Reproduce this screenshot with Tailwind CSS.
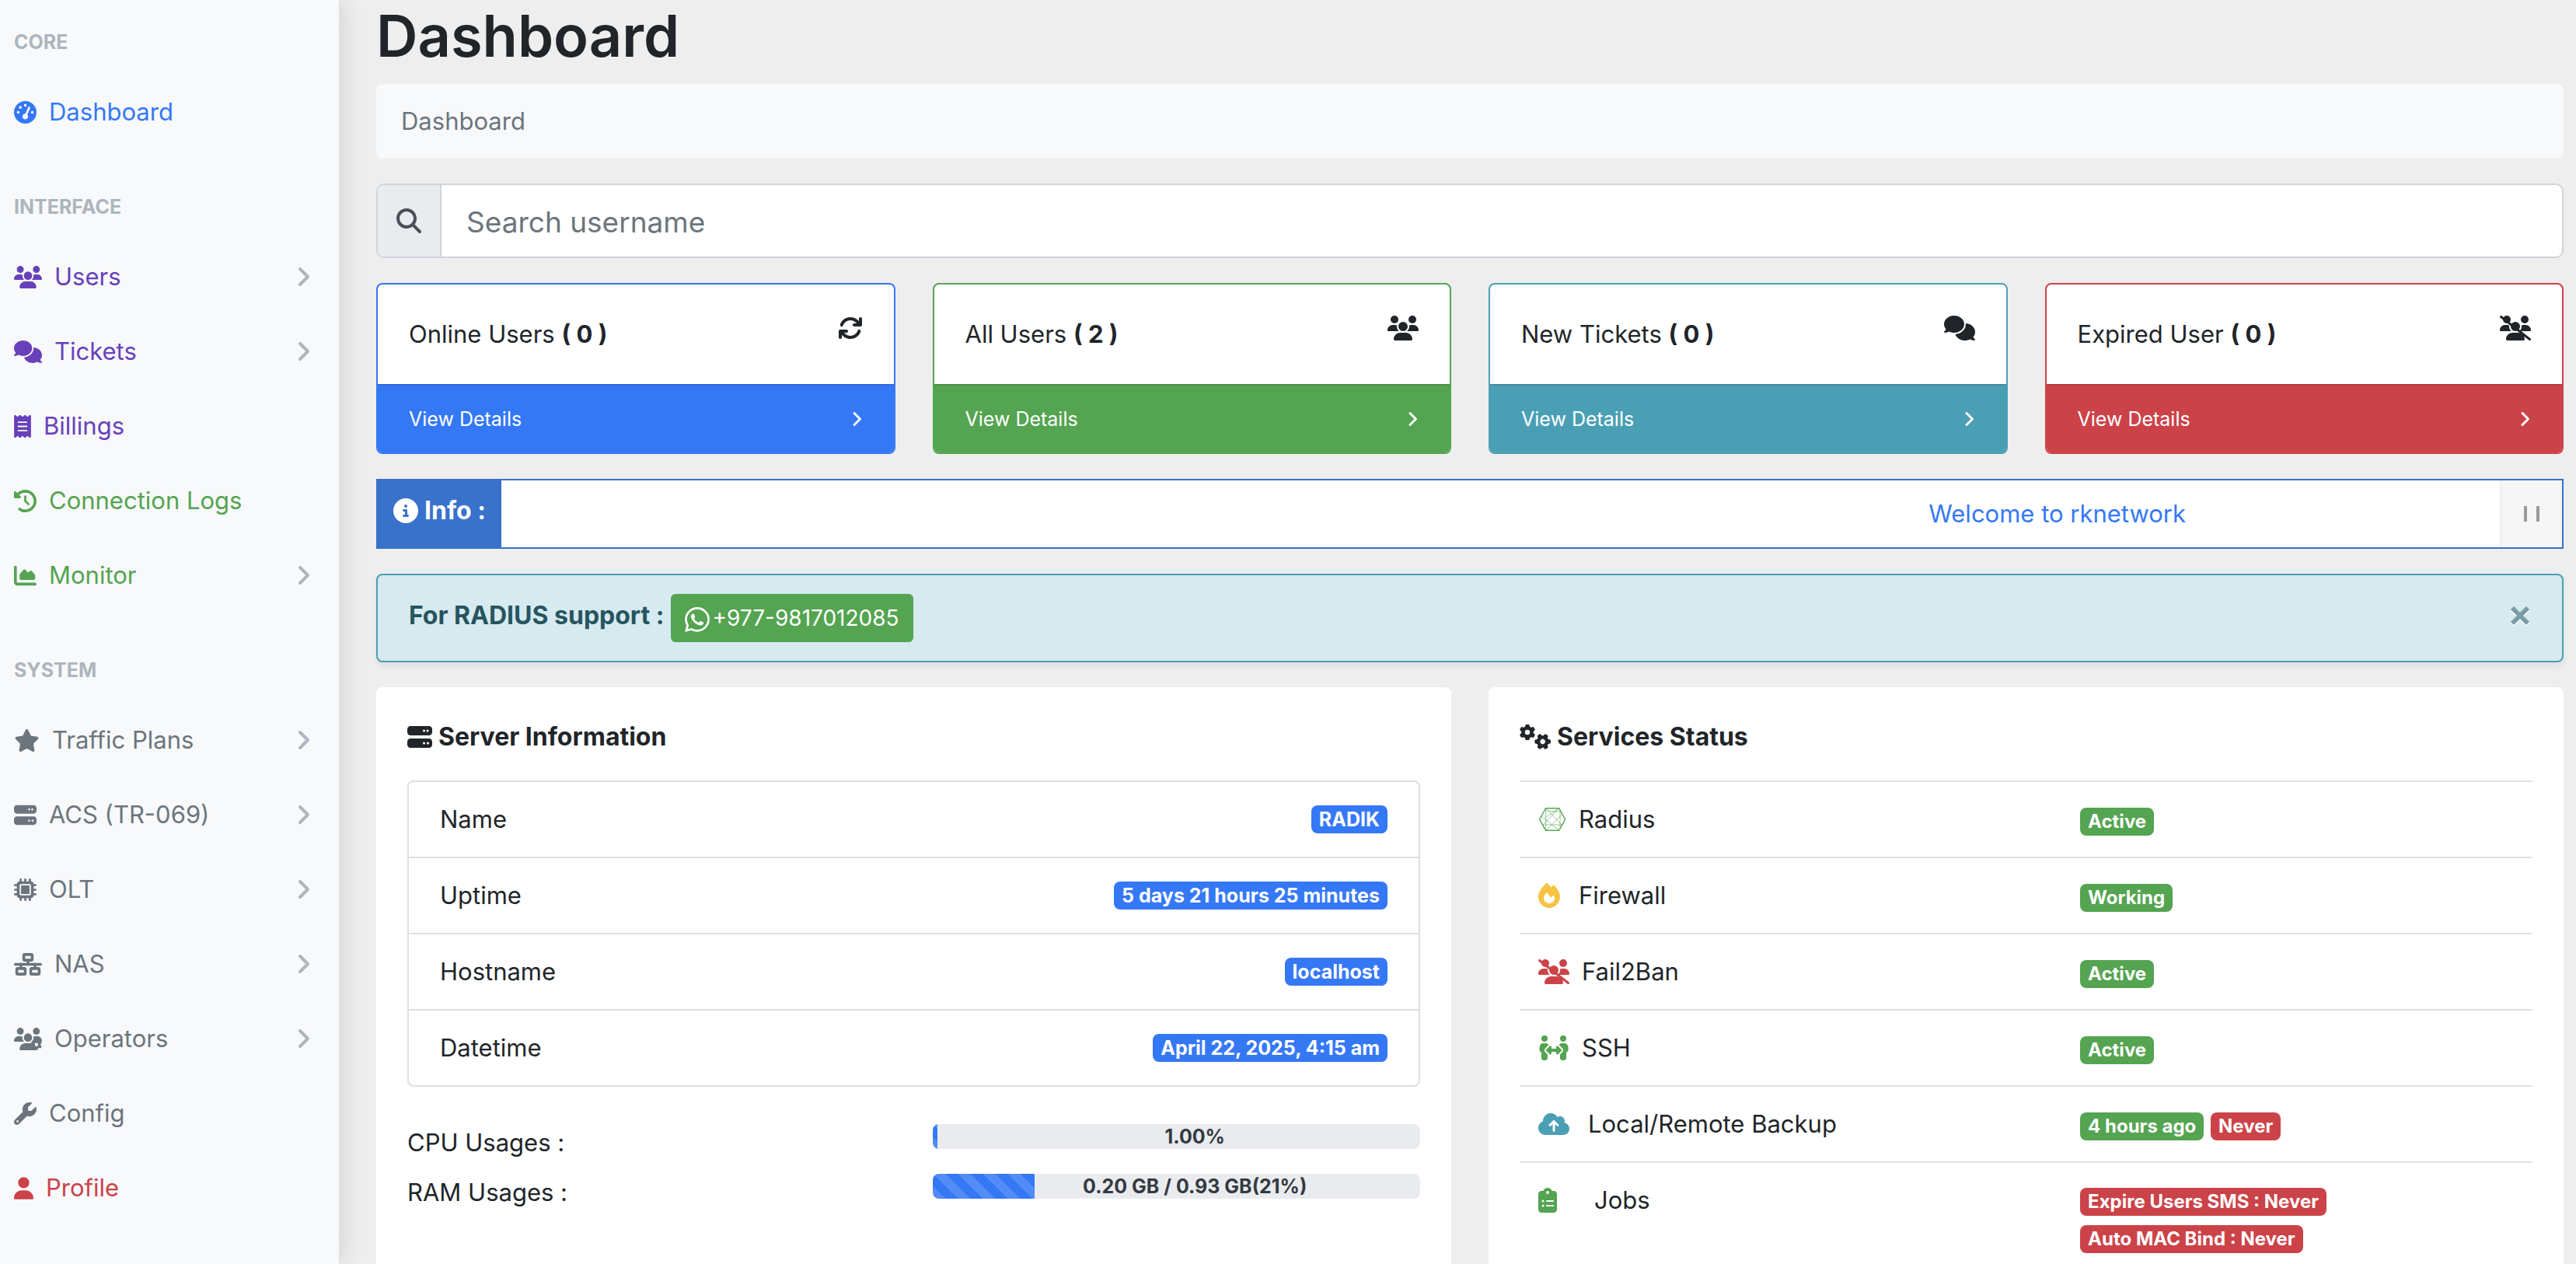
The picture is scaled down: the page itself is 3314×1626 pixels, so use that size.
<!DOCTYPE html>
<html lang="en">
<head>
<meta charset="utf-8">
<title>Dashboard</title>
<script src="https://cdn.jsdelivr.net/npm/@tailwindcss/browser@4"></script>
</head>
<body class="bg-[#eeeeee] font-['Inter',sans-serif] text-[31px] leading-[48px] text-[#212529] overflow-hidden">

<!-- Icon sprite -->
<svg class="hidden" aria-hidden="true">
  <symbol id="gauge" viewBox="0 0 512 512"><path d="M0 256a256 256 0 1 1 512 0A256 256 0 1 1 0 256zM288 96a32 32 0 1 0 -64 0 32 32 0 1 0 64 0zM256 416c35.3 0 64-28.7 64-64c0-17.4-6.9-33.1-18.1-44.6L366 161.7c5.3-12.1-.2-26.3-12.3-31.6s-26.3 .2-31.6 12.3L257.9 288c-.6 0-1.3 0-1.9 0c-35.3 0-64 28.7-64 64s28.7 64 64 64zM176 144a32 32 0 1 0 -64 0 32 32 0 1 0 64 0zM96 288a32 32 0 1 0 0-64 32 32 0 1 0 0 64zm352-32a32 32 0 1 0 -64 0 32 32 0 1 0 64 0z"/></symbol>
  <symbol id="users" viewBox="0 0 640 512"><path d="M144 0a80 80 0 1 1 0 160A80 80 0 1 1 144 0zM512 0a80 80 0 1 1 0 160A80 80 0 1 1 512 0zM0 298.7C0 239.8 47.8 192 106.7 192h42.7c15.9 0 31 3.5 44.6 9.7c-1.3 7.2-1.9 14.7-1.9 22.3c0 38.2 16.8 72.5 43.3 96c-.2 0-.4 0-.7 0H21.3C9.6 320 0 310.4 0 298.7zM405.3 320c-.2 0-.4 0-.7 0c26.6-23.5 43.3-57.8 43.3-96c0-7.6-.7-15-1.9-22.3c13.6-6.3 28.7-9.7 44.6-9.7h42.7C592.2 192 640 239.8 640 298.7c0 11.8-9.6 21.3-21.3 21.3H405.3zM224 224a96 96 0 1 1 192 0 96 96 0 1 1 -192 0zM128 485.3C128 411.7 187.7 352 261.3 352H378.7C452.3 352 512 411.7 512 485.3c0 14.7-11.9 26.7-26.7 26.7H154.7c-14.7 0-26.7-11.9-26.7-26.7z"/></symbol>
  <clipPath id="above-slash"><path d="M0 0H640V507L24 24z"/></clipPath>
  <clipPath id="below-slash"><path d="M0 80L552 512H0z"/></clipPath>
  <symbol id="users-slash" viewBox="0 0 640 512">
    <g clip-path="url(#above-slash)"><path d="M144 0a80 80 0 1 1 0 160A80 80 0 1 1 144 0zM512 0a80 80 0 1 1 0 160A80 80 0 1 1 512 0zM405.3 320c-.2 0-.4 0-.7 0c26.6-23.5 43.3-57.8 43.3-96c0-7.6-.7-15-1.9-22.3c13.6-6.3 28.7-9.7 44.6-9.7h42.7C592.2 192 640 239.8 640 298.7c0 11.8-9.6 21.3-21.3 21.3H405.3zM224 224a96 96 0 1 1 192 0 96 96 0 1 1 -192 0z"/></g>
    <g clip-path="url(#below-slash)"><path d="M0 298.7C0 239.8 47.8 192 106.7 192h42.7c15.9 0 31 3.5 44.6 9.7c-1.3 7.2-1.9 14.7-1.9 22.3c0 38.2 16.8 72.5 43.3 96c-.2 0-.4 0-.7 0H21.3C9.6 320 0 310.4 0 298.7zM128 485.3C128 411.7 187.7 352 261.3 352H378.7C452.3 352 512 411.7 512 485.3c0 14.7-11.9 26.7-26.7 26.7H154.7c-14.7 0-26.7-11.9-26.7-26.7z"/></g>
    <path d="M38.8 5.1C28.4-3.1 13.3-1.2 5.1 9.2S-1.2 34.7 9.2 42.9l592 464c10.4 8.2 25.5 6.3 33.7-4.1s6.3-25.5-4.1-33.7z"/></symbol>
  <symbol id="comments" viewBox="0 0 640 512"><path d="M208 352c114.9 0 208-78.8 208-176S322.9 0 208 0S0 78.8 0 176c0 38.6 14.7 74.3 39.6 103.4c-3.5 9.4-8.7 17.7-14.2 24.7c-4.8 6.2-9.7 11-13.3 14.3c-1.8 1.6-3.3 2.9-4.3 3.7c-.5 .4-.9 .7-1.1 .8l-.2 .2C1 327.2-1.4 334.4 .8 340.9S9.1 352 16 352c21.8 0 43.8-5.6 62.1-12.5c9.2-3.5 17.8-7.4 25.2-11.4C134.1 343.3 169.8 352 208 352zM448 176c0 112.3-99.1 196.9-216.5 207C255.8 457.4 336.4 512 432 512c38.2 0 73.9-8.7 104.7-23.9c7.5 4 16 7.9 25.2 11.4c18.3 6.9 40.3 12.5 62.1 12.5c6.9 0 13.1-4.5 15.2-11.1c2.1-6.6-.2-13.8-5.8-17.9l-.2-.2c-.2-.2-.6-.4-1.1-.8c-1-.8-2.5-2-4.3-3.7c-3.6-3.3-8.5-8.1-13.3-14.3c-5.5-7-10.7-15.4-14.2-24.7c24.9-29 39.6-64.7 39.6-103.4c0-92.8-84.9-168.9-192.6-175.5c.4 5.1 .6 10.3 .6 15.5z"/></symbol>
  <symbol id="receipt" viewBox="0 0 384 512"><path d="M14 2.2C22.5-1.7 32.5-.3 39.6 5.8L80 40.4 120.4 5.8c9-7.7 22.3-7.7 31.2 0L192 40.4 232.4 5.8c9-7.7 22.3-7.7 31.2 0L304 40.4 344.4 5.8c7.1-6.1 17.1-7.5 25.6-3.6s14 12.4 14 21.8V488c0 9.4-5.5 17.9-14 21.8s-18.5 2.5-25.6-3.6L304 471.6l-40.4 34.6c-9 7.7-22.3 7.7-31.2 0L192 471.6l-40.4 34.6c-9 7.7-22.3 7.7-31.2 0L80 471.6 39.6 506.2c-7.1 6.1-17.1 7.5-25.6 3.6S0 497.4 0 488V24C0 14.6 5.5 6.1 14 2.2zM96 144c-8.8 0-16 7.2-16 16s7.2 16 16 16H288c8.8 0 16-7.2 16-16s-7.2-16-16-16H96zM80 352c0 8.8 7.2 16 16 16H288c8.8 0 16-7.2 16-16s-7.2-16-16-16H96c-8.8 0-16 7.2-16 16zM96 240c-8.8 0-16 7.2-16 16s7.2 16 16 16H288c8.8 0 16-7.2 16-16s-7.2-16-16-16H96z"/></symbol>
  <symbol id="history" viewBox="0 0 512 512"><path d="M75 75L41 41C25.9 25.9 0 36.6 0 57.9V168c0 13.3 10.7 24 24 24H134.1c21.4 0 32.1-25.9 17-41l-30.8-30.8C155 85.5 203 64 256 64c106 0 192 86 192 192s-86 192-192 192c-40.8 0-78.6-12.7-109.7-34.4c-14.5-10.1-34.4-6.6-44.6 7.9s-6.6 34.4 7.9 44.6C151.2 495 201.7 512 256 512c141.4 0 256-114.6 256-256S397.4 0 256 0C185.3 0 121.3 28.7 75 75zm181 53c-13.3 0-24 10.7-24 24V256c0 6.4 2.5 12.5 7 17l72 72c9.4 9.4 24.6 9.4 33.9 0s9.4-24.6 0-33.9l-65-65V152c0-13.3-10.7-24-24-24z"/></symbol>
  <symbol id="chart" viewBox="0 0 512 512"><path d="M64 64c0-17.7-14.3-32-32-32S0 46.3 0 64V400c0 44.2 35.8 80 80 80H480c17.7 0 32-14.3 32-32s-14.3-32-32-32H80c-8.8 0-16-7.2-16-16V64zm96 288H448c17.7 0 32-14.3 32-32V251.8c0-7.6-2.7-15-7.7-20.8l-65.8-76.8c-12.1-14.2-33.7-15-46.9-1.8l-21 21c-10 10-26.4 9.2-35.4-1.6l-39.2-47c-12.6-15.1-35.7-15.4-48.7-.6L135.9 215c-5.1 5.8-7.9 13.3-7.9 21.1v84c0 17.7 14.3 32 32 32z"/></symbol>
  <symbol id="star" viewBox="0 0 576 512"><path d="M316.9 18C311.6 7 300.4 0 288.1 0s-23.4 7-28.8 18L195 150.3 51.4 171.5c-12 1.8-22 10.2-25.7 21.7s-.7 24.2 7.9 32.7L137.8 329 113.2 474.7c-2 12 3 24.2 12.9 31.3s23 8 33.8 2.3l128.3-68.5 128.3 68.5c10.8 5.7 23.9 4.9 33.8-2.3s14.9-19.3 12.9-31.3L438.5 329 542.7 225.9c8.6-8.5 11.7-21.2 7.9-32.7s-13.7-19.9-25.7-21.7L381.2 150.3 316.9 18z"/></symbol>
  <symbol id="server" viewBox="0 0 512 512"><path d="M64 32C28.7 32 0 60.7 0 96v64c0 35.3 28.7 64 64 64H448c35.3 0 64-28.7 64-64V96c0-35.3-28.7-64-64-64H64zm280 72a24 24 0 1 1 0 48 24 24 0 1 1 0-48zm48 24a24 24 0 1 1 48 0 24 24 0 1 1 -48 0zM64 288c-35.3 0-64 28.7-64 64v64c0 35.3 28.7 64 64 64H448c35.3 0 64-28.7 64-64V352c0-35.3-28.7-64-64-64H64zm280 72a24 24 0 1 1 0 48 24 24 0 1 1 0-48zm56 24a24 24 0 1 1 48 0 24 24 0 1 1 -48 0z"/></symbol>
  <symbol id="chip" viewBox="0 0 512 512"><path d="M176 24c0-13.3-10.7-24-24-24s-24 10.7-24 24V64c-35.3 0-64 28.7-64 64H24c-13.3 0-24 10.7-24 24s10.7 24 24 24H64v56H24c-13.3 0-24 10.7-24 24s10.7 24 24 24H64v56H24c-13.3 0-24 10.7-24 24s10.7 24 24 24H64c0 35.3 28.7 64 64 64v40c0 13.3 10.7 24 24 24s24-10.7 24-24V448h56v40c0 13.3 10.7 24 24 24s24-10.7 24-24V448h56v40c0 13.3 10.7 24 24 24s24-10.7 24-24V448c35.3 0 64-28.7 64-64h40c13.3 0 24-10.7 24-24s-10.7-24-24-24H448V280h40c13.3 0 24-10.7 24-24s-10.7-24-24-24H448V176h40c13.3 0 24-10.7 24-24s-10.7-24-24-24H448c0-35.3-28.7-64-64-64V24c0-13.3-10.7-24-24-24s-24 10.7-24 24V64H280V24c0-13.3-10.7-24-24-24s-24 10.7-24 24V64H176V24zM160 128H352c17.7 0 32 14.3 32 32V352c0 17.7-14.3 32-32 32H160c-17.7 0-32-14.3-32-32V160c0-17.7 14.3-32 32-32zm192 32H160V352H352V160z"/></symbol>
  <symbol id="network" viewBox="0 0 640 512"><path fill-rule="evenodd" d="M256 64H384v64H256V64zM240 0c-26.5 0-48 21.5-48 48v96c0 26.5 21.5 48 48 48h48v32H32c-17.7 0-32 14.3-32 32s14.3 32 32 32h96v32H80c-26.5 0-48 21.5-48 48v96c0 26.5 21.5 48 48 48H240c26.5 0 48-21.5 48-48V368c0-26.5-21.5-48-48-48H192V288H448v32H400c-26.5 0-48 21.5-48 48v96c0 26.5 21.5 48 48 48H560c26.5 0 48-21.5 48-48V368c0-26.5-21.5-48-48-48H512V288h96c17.7 0 32-14.3 32-32s-14.3-32-32-32H352V192h48c26.5 0 48-21.5 48-48V48c0-26.5-21.5-48-48-48H240zM96 448V384H224v64H96zm320-64H544v64H416V384z"/></symbol>
  <symbol id="gear" viewBox="0 0 512 512"><path d="M495.9 166.6c3.2 8.7 .5 18.4-6.4 24.6l-43.3 39.4c1.1 8.3 1.7 16.8 1.7 25.4s-.6 17.1-1.7 25.4l43.3 39.4c6.9 6.2 9.6 15.9 6.4 24.6c-4.4 11.9-9.7 23.3-15.8 34.3l-4.7 8.1c-6.6 11-14 21.4-22.1 31.2c-5.9 7.2-15.7 9.6-24.5 6.8l-55.7-17.7c-13.4 10.3-28.2 18.9-44 25.4l-12.5 57.1c-2 9.1-9 16.3-18.2 17.8c-13.8 2.3-28 3.5-42.5 3.5s-28.7-1.2-42.5-3.5c-9.2-1.5-16.2-8.7-18.2-17.8l-12.5-57.1c-15.8-6.5-30.6-15.1-44-25.4L83.1 425.9c-8.8 2.8-18.6 .3-24.5-6.8c-8.1-9.8-15.5-20.2-22.1-31.2l-4.7-8.1c-6.1-11-11.4-22.4-15.8-34.3c-3.2-8.7-.5-18.4 6.4-24.6l43.3-39.4C64.6 273.1 64 264.6 64 256s.6-17.1 1.7-25.4L22.4 191.2c-6.9-6.2-9.6-15.9-6.4-24.6c4.4-11.9 9.7-23.3 15.8-34.3l4.7-8.1c6.6-11 14-21.4 22.1-31.2c5.9-7.2 15.7-9.6 24.5-6.8l55.7 17.7c13.4-10.3 28.2-18.9 44-25.4l12.5-57.1c2-9.1 9-16.3 18.2-17.8C227.3 1.2 241.5 0 256 0s28.7 1.2 42.5 3.5c9.2 1.5 16.2 8.7 18.2 17.8l12.5 57.1c15.8 6.5 30.6 15.1 44 25.4l55.7-17.7c8.8-2.8 18.6-.3 24.5 6.8c8.1 9.8 15.5 20.2 22.1 31.2l4.7 8.1c6.1 11 11.4 22.4 15.8 34.3zM256 336a80 80 0 1 0 0-160 80 80 0 1 0 0 160z"/></symbol>
  <symbol id="gears" viewBox="0 0 640 512"><use href="#gear" width="330" height="330" x="-5" y="-5"/><g transform="rotate(30 475 352)"><use href="#gear" width="330" height="330" x="310" y="187"/></g></symbol>
  <symbol id="users-gear" viewBox="0 0 640 512">
    <mask id="gear-gap" maskUnits="userSpaceOnUse" x="0" y="0" width="640" height="512"><rect width="640" height="512" fill="#fff"/><circle cx="512" cy="384" r="150" fill="#000"/></mask>
    <g mask="url(#gear-gap)"><use href="#users" width="640" height="512"/></g><use href="#gear" width="256" height="256" x="384" y="256"/></symbol>
  <symbol id="wrench" viewBox="0 0 512 512"><path d="M352 320c88.4 0 160-71.6 160-160c0-15.3-2.2-30.1-6.2-44.2c-3.1-10.8-16.4-13.2-24.3-5.3l-76.8 76.8c-3 3-7.1 4.7-11.3 4.7H336c-8.8 0-16-7.2-16-16V118.6c0-4.2 1.7-8.3 4.7-11.3l76.8-76.8c7.9-7.9 5.4-21.2-5.3-24.3C382.1 2.2 367.3 0 352 0C263.6 0 192 71.6 192 160c0 19.1 3.4 37.5 9.5 54.5L19.9 396.1C7.2 408.8 0 426.1 0 444.1C0 481.6 30.4 512 67.9 512c18 0 35.3-7.2 48-19.9L297.5 310.5c17 6.2 35.4 9.5 54.5 9.5zM80 408a24 24 0 1 1 0 48 24 24 0 1 1 0-48z"/></symbol>
  <symbol id="user" viewBox="0 0 448 512"><path d="M224 256A128 128 0 1 0 224 0a128 128 0 1 0 0 256zm-45.7 48C79.8 304 0 383.8 0 482.3C0 498.7 13.3 512 29.7 512H418.3c16.4 0 29.7-13.3 29.7-29.7C448 383.8 368.2 304 269.7 304H178.3z"/></symbol>
  <symbol id="sync" viewBox="0 0 512 512"><path d="M105.1 202.6c7.7-21.8 20.2-42.3 37.8-59.8c62.5-62.5 163.8-62.5 226.3 0L386.3 160H336c-17.7 0-32 14.3-32 32s14.3 32 32 32H463.5h.4c17.7 0 32-14.3 32-32V64c0-17.7-14.3-32-32-32s-32 14.3-32 32v51.2L414.4 97.6c-87.5-87.5-229.3-87.5-316.8 0C73.2 122 55.6 150.7 44.8 181.4c-5.9 16.7 2.9 34.9 19.5 40.8s34.9-2.9 40.8-19.5zM39 289.3c-5 1.5-9.8 4.2-13.7 8.2c-4 4-6.7 8.8-8.1 14c-.3 1.2-.6 2.5-.8 3.8c-.3 1.7-.4 3.4-.4 5.1V448c0 17.7 14.3 32 32 32s32-14.3 32-32V396.9l17.6 17.5c87.5 87.4 229.3 87.4 316.7 0c24.4-24.4 42.1-53.1 52.9-83.7c5.9-16.7-2.9-34.9-19.5-40.8s-34.9 2.9-40.8 19.5c-7.7 21.8-20.2 42.3-37.8 59.8c-62.5 62.5-163.8 62.5-226.3 0l-.1-.1L125.6 352H176c17.7 0 32-14.3 32-32s-14.3-32-32-32H48.4c-1.6 0-3.2 .1-4.8 .3s-3.1 .5-4.6 1z"/></symbol>
  <symbol id="search" viewBox="0 0 512 512"><path d="M416 208c0 45.9-14.9 88.3-40 122.7L502.6 457.4c12.5 12.5 12.5 32.8 0 45.3s-32.8 12.5-45.3 0L330.7 376c-34.4 25.2-76.8 40-122.7 40C93.1 416 0 322.9 0 208S93.1 0 208 0S416 93.1 416 208zM208 352a144 144 0 1 0 0-288 144 144 0 1 0 0 288z"/></symbol>
  <symbol id="info" viewBox="0 0 512 512"><path d="M256 512A256 256 0 1 0 256 0a256 256 0 1 0 0 512zM216 336h24V272H216c-13.3 0-24-10.7-24-24s10.7-24 24-24h48c13.3 0 24 10.7 24 24v88h8c13.3 0 24 10.7 24 24s-10.7 24-24 24H216c-13.3 0-24-10.7-24-24s10.7-24 24-24zm40-208a32 32 0 1 1 0 64 32 32 0 1 1 0-64z"/></symbol>
  <symbol id="whatsapp" viewBox="0 0 16 16"><path d="M13.601 2.326A7.854 7.854 0 0 0 7.994 0C3.627 0 .068 3.558.064 7.926c0 1.399.366 2.76 1.057 3.965L0 16l4.204-1.102a7.933 7.933 0 0 0 3.79.965h.004c4.368 0 7.926-3.558 7.93-7.93A7.898 7.898 0 0 0 13.6 2.326zM7.994 14.521a6.573 6.573 0 0 1-3.356-.92l-.24-.144-2.494.654.666-2.433-.156-.251a6.56 6.56 0 0 1-1.007-3.505c0-3.626 2.957-6.584 6.591-6.584a6.56 6.56 0 0 1 4.66 1.931 6.557 6.557 0 0 1 1.928 4.66c-.004 3.639-2.961 6.592-6.592 6.592zm3.615-4.934c-.197-.099-1.17-.578-1.353-.646-.182-.065-.315-.099-.445.099-.133.197-.513.646-.627.775-.114.133-.232.148-.43.05-.197-.1-.836-.308-1.592-.985-.59-.525-.985-1.175-1.103-1.372-.114-.198-.011-.304.088-.403.087-.088.197-.232.296-.346.1-.114.133-.198.198-.33.065-.134.034-.248-.015-.347-.05-.099-.445-1.076-.612-1.47-.16-.389-.323-.335-.445-.34-.114-.007-.247-.007-.38-.007a.729.729 0 0 0-.529.247c-.182.198-.691.677-.691 1.654 0 .977.71 1.916.81 2.049.098.133 1.394 2.132 3.383 2.992.47.205.84.326 1.129.418.475.152.904.129 1.246.08.38-.058 1.171-.48 1.338-.943.164-.464.164-.86.114-.943-.049-.084-.182-.133-.38-.232z"/></symbol>
  <symbol id="fire" viewBox="0 0 448 512"><path fill-rule="evenodd" d="M159.3 5.4c7.8-7.3 19.9-7.2 27.7 .1c27.6 25.9 53.5 53.8 77.7 84c11-14.4 23.5-30.1 37-42.9c7.9-7.4 20.1-7.4 28 .1c34.6 33 63.9 76.6 84.5 118c20.3 40.8 33.8 82.5 33.8 111.9C448 404.2 348.2 512 224 512C98.4 512 0 404.1 0 276.5c0-38.4 17.8-85.3 45.4-131.7C73.3 97.7 112.7 48.6 159.3 5.4zM225.7 416c25.3 0 47.7-7 68.8-21c42.1-29.4 53.4-88.2 28.1-134.4c-4.5-9-16-9.6-22.5-2l-25.2 29.3c-6.6 7.6-18.5 7.4-24.7-.5c-16.5-21-46-58.5-62.8-79.8c-6.3-8-18.3-8.1-24.7-.1c-33.8 42.5-50.8 69.3-50.8 99.4C112 375.4 162.6 416 225.7 416z"/></symbol>
  <symbol id="people" viewBox="0 0 640 512"><path d="M64 64a64 64 0 1 1 128 0A64 64 0 1 1 64 64zM25.9 233.4C29.3 191.9 64 160 105.6 160h44.8c27 0 51 13.4 65.5 34.1c-2.7 1.9-5.2 4-7.5 6.3l-64 64c-21.9 21.9-21.9 57.3 0 79.2L192 391.2V464c0 26.5-21.5 48-48 48H112c-26.5 0-48-21.5-48-48V348.3c-26.5-9.5-44.7-35.8-42.2-65.6l4.1-49.3zM448 64a64 64 0 1 1 128 0A64 64 0 1 1 448 64zM431.6 200.4c-2.3-2.3-4.9-4.4-7.5-6.3c14.5-20.7 38.6-34.1 65.5-34.1h44.8c41.6 0 76.3 31.9 79.7 73.4l4.1 49.3c2.5 29.8-15.7 56.1-42.2 65.6V464c0 26.5-21.5 48-48 48H496c-26.5 0-48-21.5-48-48V391.2l47.6-47.6c21.9-21.9 21.9-57.3 0-79.2l-64-64zM272 240v32h96V240c0-9.7 5.8-18.5 14.8-22.2s19.3-1.7 26.2 5.2l64 64c9.4 9.4 9.4 24.6 0 33.9l-64 64c-6.9 6.9-17.2 8.9-26.2 5.2s-14.8-12.5-14.8-22.2V336H272v32c0 9.7-5.8 18.5-14.8 22.2s-19.3 1.7-26.2-5.2l-64-64c-9.4-9.4-9.4-24.6 0-33.9l64-64c6.9-6.9 17.2-8.9 26.2-5.2s14.8 12.5 14.8 22.2z"/></symbol>
  <symbol id="cloud" viewBox="0 0 640 512"><path d="M144 480C64.5 480 0 415.5 0 336c0-62.8 40.2-116.2 96.2-135.9c-.1-2.7-.2-5.4-.2-8.1c0-88.4 71.6-160 160-160c59.3 0 111 32.2 138.7 80.2C409.9 102 428.3 96 448 96c53 0 96 43 96 96c0 12.2-2.3 23.8-6.4 34.6C596 238.4 640 290.1 640 352c0 70.7-57.3 128-128 128H144zm79-217c-9.4 9.4-9.4 24.6 0 33.9s24.6 9.4 33.9 0l39-39V392c0 13.3 10.7 24 24 24s24-10.7 24-24V257.9l39 39c9.4 9.4 24.6 9.4 33.9 0s9.4-24.6 0-33.9l-80-80c-9.4-9.4-24.6-9.4-33.9 0l-80 80z"/></symbol>
  <symbol id="clipboard" viewBox="0 0 384 512"><path d="M192 0c-41.8 0-77.4 26.7-90.5 64H64C28.7 64 0 92.7 0 128V448c0 35.3 28.7 64 64 64H320c35.3 0 64-28.7 64-64V128c0-35.3-28.7-64-64-64H282.5C269.4 26.7 233.8 0 192 0zm0 64a32 32 0 1 1 0 64 32 32 0 1 1 0-64zM72 272a24 24 0 1 1 48 0 24 24 0 1 1 -48 0zm104-16H304c8.8 0 16 7.2 16 16s-7.2 16-16 16H176c-8.8 0-16-7.2-16-16s7.2-16 16-16zM72 368a24 24 0 1 1 48 0 24 24 0 1 1 -48 0zm88 0c0-8.8 7.2-16 16-16H304c8.8 0 16 7.2 16 16s-7.2 16-16 16H176c-8.8 0-16-7.2-16-16z"/></symbol>
  <symbol id="mesh" viewBox="0 0 36 32"><g fill="none" stroke="currentColor"><path d="M1.600 16L9.600 1.700h17l8 14.300l-8 14.300h-17z" stroke-width="1.400"/><path d="M9.600 1.700v28.600M26.600 1.700L9.600 13.500M4 12L26.600 30M9.600 1.700L30 23M26.600 1.700L6 23M10 30L31 9M6 23H31M9.600 5L29 6M28 3V26" stroke-width=".6"/></g></symbol>
  <symbol id="angle" viewBox="0 0 20 32"><path d="M6 6l10 10L6 26" fill="none" stroke="currentColor" stroke-width="4" stroke-linecap="round" stroke-linejoin="round"/></symbol>
</svg>

<div class="flex min-h-screen">
  <!-- Sidebar -->
  <nav class="relative w-[436px] shrink-0 bg-[#f8f9fb] pt-9 shadow-[0_0_32px_rgba(0,0,0,0.15)]">
    <h2 class="px-[18px] pb-6 text-[25px] leading-9 font-bold uppercase text-[#adb5bd]">Core</h2>
    <a href="#" class="flex items-center gap-4 py-6 pr-9 pl-[18px] text-[#3578f6]"><svg class="h-[29px] w-[29px] fill-current"><use href="#gauge"/></svg>Dashboard</a>

    <h2 class="px-[18px] pt-14 pb-6 text-[25px] leading-9 font-bold uppercase text-[#adb5bd]">Interface</h2>
    <a href="#" class="flex items-center gap-4 py-6 pr-9 pl-[18px] text-[#6841ba]"><svg class="h-[29px] w-9 fill-current"><use href="#users"/></svg>Users<svg class="ml-auto h-8 w-5 text-[#adb5bd]"><use href="#angle"/></svg></a>
    <a href="#" class="flex items-center gap-4 py-6 pr-9 pl-[18px] text-[#6841ba]"><svg class="h-[29px] w-9 fill-current"><use href="#comments"/></svg>Tickets<svg class="ml-auto h-8 w-5 text-[#adb5bd]"><use href="#angle"/></svg></a>
    <a href="#" class="flex items-center gap-4 py-6 pr-9 pl-[18px] text-[#6841ba]"><svg class="h-[29px] w-[22px] fill-current"><use href="#receipt"/></svg>Billings</a>
    <a href="#" class="flex items-center gap-4 py-6 pr-9 pl-[18px] text-[#54a451]"><svg class="h-[29px] w-[29px] fill-current"><use href="#history"/></svg>Connection Logs</a>
    <a href="#" class="flex items-center gap-4 py-6 pr-9 pl-[18px] text-[#54a451]"><svg class="h-[29px] w-[29px] fill-current"><use href="#chart"/></svg>Monitor<svg class="ml-auto h-8 w-5 text-[#adb5bd]"><use href="#angle"/></svg></a>

    <h2 class="px-[18px] pt-14 pb-6 text-[25px] leading-9 font-bold uppercase text-[#adb5bd]">System</h2>
    <a href="#" class="flex items-center gap-4 py-6 pr-9 pl-[18px] text-[#6c757d]"><svg class="h-[29px] w-[33px] fill-current"><use href="#star"/></svg>Traffic Plans<svg class="ml-auto h-8 w-5 text-[#adb5bd]"><use href="#angle"/></svg></a>
    <a href="#" class="flex items-center gap-4 py-6 pr-9 pl-[18px] text-[#6c757d]"><svg class="h-[29px] w-[29px] fill-current"><use href="#server"/></svg>ACS (TR-069)<svg class="ml-auto h-8 w-5 text-[#adb5bd]"><use href="#angle"/></svg></a>
    <a href="#" class="flex items-center gap-4 py-6 pr-9 pl-[18px] text-[#6c757d]"><svg class="h-[29px] w-[29px] fill-current"><use href="#chip"/></svg>OLT<svg class="ml-auto h-8 w-5 text-[#adb5bd]"><use href="#angle"/></svg></a>
    <a href="#" class="flex items-center gap-4 py-6 pr-9 pl-[18px] text-[#6c757d]"><svg class="h-[29px] w-9 fill-current"><use href="#network"/></svg>NAS<svg class="ml-auto h-8 w-5 text-[#adb5bd]"><use href="#angle"/></svg></a>
    <a href="#" class="flex items-center gap-4 py-6 pr-9 pl-[18px] text-[#6c757d]"><svg class="h-[29px] w-9 fill-current"><use href="#users-gear"/></svg>Operators<svg class="ml-auto h-8 w-5 text-[#adb5bd]"><use href="#angle"/></svg></a>
    <a href="#" class="flex items-center gap-4 py-6 pr-9 pl-[18px] text-[#6c757d]"><svg class="h-[29px] w-[29px] fill-current"><use href="#wrench"/></svg>Config</a>
    <a href="#" class="flex items-center gap-4 py-6 pr-9 pl-[18px] text-[#cb4349]"><svg class="h-[29px] w-[25px] fill-current"><use href="#user"/></svg>Profile</a>
  </nav>

  <main class="flex min-w-0 flex-1 flex-col gap-8 pr-4 pl-12">
    <div>
      <h1 class="pb-4 text-[74px] leading-[92px] font-semibold">Dashboard</h1>
      <ol class="rounded-lg bg-[#f8f9fb] px-8 py-6 text-[#6c757d]"><li>Dashboard</li></ol>
    </div>

    <!-- Search -->
    <div class="flex h-24 overflow-hidden rounded-[10px] border-2 border-[#ced4da] bg-white">
      <label for="username" class="flex items-center border-r-2 border-[#ced4da] bg-[#e9ebef] px-6"><svg class="size-8 fill-[#495057]" role="img" aria-label="Search"><use href="#search"/></svg></label>
      <input id="username" type="text" placeholder="Search username" class="flex-1 bg-white px-8 pt-1 text-[37px] outline-none placeholder:text-[#6c757d]">
    </div>

    <!-- Summary cards -->
    <section class="grid grid-cols-4 gap-12">
      <article class="overflow-hidden rounded-lg border-2 border-[#3578f6] bg-white">
        <div class="flex items-start justify-between p-10"><p>Online Users <b>( 0 )</b></p><svg class="size-8 fill-current"><use href="#sync"/></svg></div>
        <a href="#" class="flex h-[88px] items-center justify-between border-t-2 border-black/12 bg-[#3578f6] px-10 text-[25px] text-white">View Details<svg class="h-6 w-4"><use href="#angle"/></svg></a>
      </article>
      <article class="overflow-hidden rounded-lg border-2 border-[#54a451] bg-white">
        <div class="flex items-start justify-between p-10"><p>All Users <b>( 2 )</b></p><svg class="h-8 w-10 fill-current"><use href="#users"/></svg></div>
        <a href="#" class="flex h-[88px] items-center justify-between border-t-2 border-black/12 bg-[#54a451] px-10 text-[25px] text-white">View Details<svg class="h-6 w-4"><use href="#angle"/></svg></a>
      </article>
      <article class="overflow-hidden rounded-lg border-2 border-[#4b9fb5] bg-white">
        <div class="flex items-start justify-between p-10"><p>New Tickets <b>( 0 )</b></p><svg class="h-8 w-10 fill-current"><use href="#comments"/></svg></div>
        <a href="#" class="flex h-[88px] items-center justify-between border-t-2 border-black/12 bg-[#4b9fb5] px-10 text-[25px] text-white">View Details<svg class="h-6 w-4"><use href="#angle"/></svg></a>
      </article>
      <article class="overflow-hidden rounded-lg border-2 border-[#cb4349] bg-white">
        <div class="flex items-start justify-between p-10"><p>Expired User <b>( 0 )</b></p><svg class="h-8 w-10 fill-current"><use href="#users-slash"/></svg></div>
        <a href="#" class="flex h-[88px] items-center justify-between border-t-2 border-black/12 bg-[#cb4349] px-10 text-[25px] text-white">View Details<svg class="h-6 w-4"><use href="#angle"/></svg></a>
      </article>
    </section>

    <!-- News ticker -->
    <section class="flex h-[90px] border-2 border-[#3972cb] bg-white">
      <h2 class="flex w-[159px] items-center gap-2 bg-[#3972cb] pb-2 pl-5 text-[32px] font-bold text-white"><svg class="size-8 fill-current"><use href="#info"/></svg>Info :</h2>
      <div class="flex flex-1 items-center justify-end pr-[404px]"><a href="#" class="text-[#3578f6]">Welcome to rknetwork</a></div>
      <button type="button" aria-label="Pause" class="flex w-20 items-center justify-center gap-3 border-l-2 border-[#eeeeee] bg-[#f6f6f6]"><span class="h-5 w-1 bg-[#999999]"></span><span class="h-5 w-1 bg-[#999999]"></span></button>
    </section>

    <!-- Support notice -->
    <section class="flex items-start rounded-lg border-2 border-[#4b9fb5] bg-[#d6eaef] px-10 py-6 text-[#26555f] shadow-[0_4px_8px_rgba(0,0,0,0.075)]">
      <div class="flex flex-1 items-start gap-2"><b class="pt-1 text-[32px]">For RADIUS support :</b>
        <a href="#" class="flex h-[62px] items-center gap-1 rounded-md bg-[#54a451] px-[18px] text-[28px] text-white"><svg class="mt-1 size-8 fill-current"><use href="#whatsapp"/></svg>+977-9817012085</a></div>
      <button type="button" aria-label="Close" class="mt-3.5 text-[#7c9da7]"><svg class="size-7 drop-shadow-[0_2px_0_#fff]" viewBox="0 0 28 28"><path d="M4 4l20 20M24 4L4 24" stroke="currentColor" stroke-width="6"/></svg></button>
    </section>

    <section class="grid flex-1 grid-cols-2 gap-12">
      <article class="rounded-t-lg bg-white p-10">
        <h2 class="flex items-center gap-2 pb-8 text-[32px] font-bold"><svg class="size-8 fill-current"><use href="#server"/></svg>Server Information</h2>
        <ul class="divide-y-2 divide-[#dfdfdf] rounded-lg border-2 border-[#dfdfdf]">
          <li class="flex items-center justify-between px-10 py-6">Name<span class="rounded-lg bg-[#3578f6] px-2.5 text-[25px] leading-9 font-bold text-white">RADIK</span></li>
          <li class="flex items-center justify-between px-10 py-6">Uptime<span class="rounded-lg bg-[#3578f6] px-2.5 text-[25px] leading-9 font-bold text-white">5 days 21 hours 25 minutes</span></li>
          <li class="flex items-center justify-between px-10 py-6">Hostname<span class="rounded-lg bg-[#3578f6] px-2.5 text-[25px] leading-9 font-bold text-white">localhost</span></li>
          <li class="flex items-center justify-between px-10 py-6">Datetime<span class="rounded-lg bg-[#3578f6] px-2.5 text-[25px] leading-9 font-bold text-white">April 22, 2025, 4:15 am</span></li>
        </ul>
        <div class="grid grid-cols-2 gap-x-12 gap-y-4 pt-12">
          <p>CPU Usages :</p>
          <div class="relative h-8 overflow-hidden rounded-lg bg-[#e9ebef] pl-12 text-center text-[25px] leading-8 font-bold text-[#343a40]"><div class="absolute inset-y-0 left-0 bg-[#3578f6] bg-[linear-gradient(45deg,rgba(255,255,255,.15)_25%,transparent_25%,transparent_50%,rgba(255,255,255,.15)_50%,rgba(255,255,255,.15)_75%,transparent_75%,transparent)] bg-size-[32px_32px]" style="width:1%"></div>1.00%</div>
          <p>RAM Usages :</p>
          <div class="relative h-8 overflow-hidden rounded-lg bg-[#e9ebef] pl-12 text-center text-[25px] leading-8 font-bold text-[#343a40]"><div class="absolute inset-y-0 left-0 bg-[#3578f6] bg-[linear-gradient(45deg,rgba(255,255,255,.15)_25%,transparent_25%,transparent_50%,rgba(255,255,255,.15)_50%,rgba(255,255,255,.15)_75%,transparent_75%,transparent)] bg-size-[32px_32px]" style="width:21%"></div>0.20 GB / 0.93 GB(21%)</div>
        </div>
      </article>

      <article class="rounded-t-lg bg-white p-10 pb-0">
        <h2 class="flex items-center gap-2 pb-8 text-[32px] font-bold"><svg class="h-8 w-10 fill-current"><use href="#gears"/></svg>Services Status</h2>
        <table class="w-full table-fixed">
          <colgroup><col class="w-[53.5%]"><col></colgroup>
          <tbody>
            <tr class="border-t-2 border-[#dee2e6]"><td class="px-6 py-6"><div class="flex items-center gap-4"><svg class="h-8 w-9 text-[#54a451]"><use href="#mesh"/></svg>Radius</div></td><td class="px-6"><span class="inline-block rounded-lg bg-[#54a451] px-2.5 text-[24px] leading-9 font-bold text-white">Active</span></td></tr>
            <tr class="border-t-2 border-[#dee2e6]"><td class="px-6 py-6"><div class="flex items-center gap-6"><svg class="h-8 w-7 fill-[#f7c244]"><use href="#fire"/></svg>Firewall</div></td><td class="px-6"><span class="inline-block rounded-lg bg-[#54a451] px-2.5 text-[24px] leading-9 font-bold text-white">Working</span></td></tr>
            <tr class="border-t-2 border-[#dee2e6]"><td class="px-6 py-6"><div class="flex items-center gap-4"><svg class="h-8 w-10 fill-[#cb4349]"><use href="#users-slash"/></svg>Fail2Ban</div></td><td class="px-6"><span class="inline-block rounded-lg bg-[#54a451] px-2.5 text-[24px] leading-9 font-bold text-white">Active</span></td></tr>
            <tr class="border-t-2 border-[#dee2e6]"><td class="px-6 py-6"><div class="flex items-center gap-4"><svg class="h-8 w-10 fill-[#54a451]"><use href="#people"/></svg>SSH</div></td><td class="px-6"><span class="inline-block rounded-lg bg-[#54a451] px-2.5 text-[24px] leading-9 font-bold text-white">Active</span></td></tr>
            <tr class="border-t-2 border-[#dee2e6]"><td class="px-6 py-6"><div class="flex items-center gap-6"><svg class="h-8 w-10 fill-[#4b9fb5]"><use href="#cloud"/></svg>Local/Remote Backup</div></td><td class="px-6"><span class="inline-block rounded-lg bg-[#54a451] px-2.5 text-[24px] leading-9 font-bold text-white">4 hours ago</span> <span class="inline-block rounded-lg bg-[#cb4349] px-2.5 text-[24px] leading-9 font-bold text-white">Never</span></td></tr>
            <tr class="border-t-2 border-[#dee2e6] align-top"><td class="px-6 py-6"><div class="flex items-center gap-12"><svg class="h-8 w-6 fill-[#54a451]"><use href="#clipboard"/></svg>Jobs</div></td><td class="px-6 pt-8"><div class="flex flex-col items-start gap-3"><span class="rounded-lg bg-[#cb4349] px-2.5 text-[24px] leading-9 font-bold text-white">Expire Users SMS : Never</span><span class="rounded-lg bg-[#cb4349] px-2.5 text-[24px] leading-9 font-bold text-white">Auto MAC Bind : Never</span></div></td></tr>
          </tbody>
        </table>
      </article>
    </section>
  </main>
</div>
</body>
</html>
